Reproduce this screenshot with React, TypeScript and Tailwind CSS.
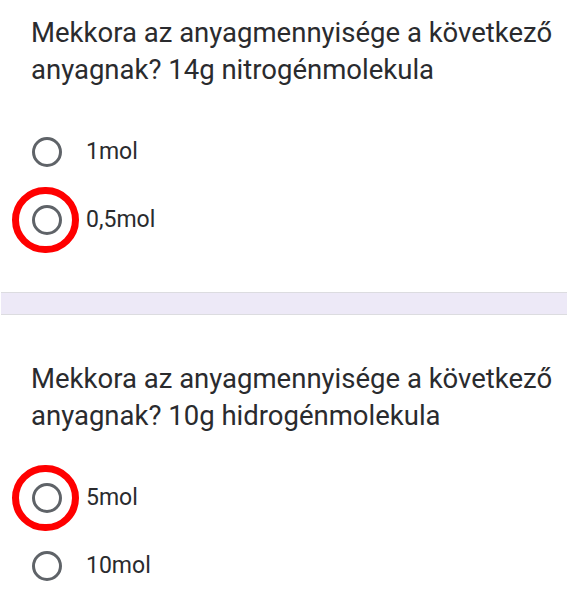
import React from "react";

type Question = {
    title: string[];
    options: { label: string; marked: boolean }[];
};

const questions: Question[] = [
    {
        title: ["Mekkora az anyagmennyisége a következő", "anyagnak? 14g nitrogénmolekula"],
        options: [
            { label: "1mol", marked: false },
            { label: "0,5mol", marked: true },
        ],
    },
    {
        title: ["Mekkora az anyagmennyisége a következő", "anyagnak? 10g hidrogénmolekula"],
        options: [
            { label: "5mol", marked: true },
            { label: "10mol", marked: false },
        ],
    },
];

function Radio({ marked }: { marked: boolean }) {
    return (
        <div className="relative w-[30px] h-[30px] shrink-0">
            <div className="w-[30px] h-[30px] rounded-full border-[3px] border-[#5f6368]" />
            {marked ? (
                <div className="absolute left-[-20px] top-[-18px] w-[67px] h-[66px] rounded-full border-[7px] border-[#ff0000]" />
            ) : null}
        </div>
    );
}

function QuestionBlock({ question }: { question: Question }) {
    return (
        <div className="flex flex-col">
            <div className="pl-[31px] text-[27.5px] leading-[37px] text-[#2a2b2e]">
                {question.title.map((line, i) => (
                    <div key={i}>{line}</div>
                ))}
            </div>
            <div className="mt-[30px] flex flex-col">
                {question.options.map((opt, i) => (
                    <div key={i} className="h-[68px] flex items-center pl-[32px] gap-[24px]">
                        <Radio marked={opt.marked} />
                        <span className="text-[23px] text-[#2a2b2e]">{opt.label}</span>
                    </div>
                ))}
            </div>
        </div>
    );
}

export default function App() {
    return (
        <div className="w-[581px] h-[598px] bg-white overflow-hidden font-['Roboto',sans-serif] pt-[14px]">
            <QuestionBlock question={questions[0]} />
            <div className="mt-[38px] ml-px w-[566px] h-[23px] bg-[#ede9f7] border-y border-[#dcdce0]" />
            <div className="mt-[45px]">
                <QuestionBlock question={questions[1]} />
            </div>
        </div>
    );
}
